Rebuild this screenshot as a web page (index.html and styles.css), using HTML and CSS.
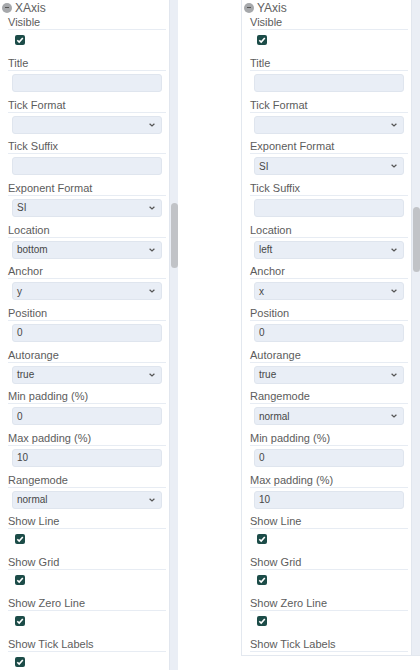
FILE: index.html
```html
<!DOCTYPE html>
<html lang="en">
  <head>
    <meta charset="UTF-8" />
    <title>Axis Settings</title>
    <link rel="stylesheet" href="styles.css">
  </head>
  <body>
    <div class="board">
      <section class="panel panel-x">
        <div class="panel-body">
          <div class="panel-head">
            <span class="toggle"><span class="dash"></span></span>
            <span>XAxis</span>
          </div>

          <div class="row check-row"><div class="label">Visible</div><span class="check"><svg viewBox="0 0 10 10"><path d="M2.3 5.2 L4.2 7.1 L7.8 2.9" /></svg></span></div>
          <div class="row"><div class="label">Title</div><div class="input"></div></div>
          <div class="row"><div class="label">Tick Format</div><div class="input select"><span></span><svg class="chev" viewBox="0 0 6 4"><path d="M0.6 0.7 L3 3 L5.4 0.7" /></svg></div></div>
          <div class="row"><div class="label">Tick Suffix</div><div class="input"></div></div>
          <div class="row"><div class="label">Exponent Format</div><div class="input select"><span>SI</span><svg class="chev" viewBox="0 0 6 4"><path d="M0.6 0.7 L3 3 L5.4 0.7" /></svg></div></div>
          <div class="row"><div class="label">Location</div><div class="input select"><span>bottom</span><svg class="chev" viewBox="0 0 6 4"><path d="M0.6 0.7 L3 3 L5.4 0.7" /></svg></div></div>
          <div class="row"><div class="label">Anchor</div><div class="input select"><span>y</span><svg class="chev" viewBox="0 0 6 4"><path d="M0.6 0.7 L3 3 L5.4 0.7" /></svg></div></div>
          <div class="row"><div class="label">Position</div><div class="input"><span>0</span></div></div>
          <div class="row"><div class="label">Autorange</div><div class="input select"><span>true</span><svg class="chev" viewBox="0 0 6 4"><path d="M0.6 0.7 L3 3 L5.4 0.7" /></svg></div></div>
          <div class="row"><div class="label">Min padding (%)</div><div class="input"><span>0</span></div></div>
          <div class="row"><div class="label">Max padding (%)</div><div class="input"><span>10</span></div></div>
          <div class="row"><div class="label">Rangemode</div><div class="input select"><span>normal</span><svg class="chev" viewBox="0 0 6 4"><path d="M0.6 0.7 L3 3 L5.4 0.7" /></svg></div></div>
          <div class="row check-row"><div class="label">Show Line</div><span class="check"><svg viewBox="0 0 10 10"><path d="M2.3 5.2 L4.2 7.1 L7.8 2.9" /></svg></span></div>
          <div class="row check-row"><div class="label">Show Grid</div><span class="check"><svg viewBox="0 0 10 10"><path d="M2.3 5.2 L4.2 7.1 L7.8 2.9" /></svg></span></div>
          <div class="row check-row"><div class="label">Show Zero Line</div><span class="check"><svg viewBox="0 0 10 10"><path d="M2.3 5.2 L4.2 7.1 L7.8 2.9" /></svg></span></div>
          <div class="row check-row"><div class="label">Show Tick Labels</div><span class="check"><svg viewBox="0 0 10 10"><path d="M2.3 5.2 L4.2 7.1 L7.8 2.9" /></svg></span></div>
        </div>
        <div class="track"><div class="thumb"></div></div>
      </section>

      <section class="panel panel-y">
        <div class="panel-body">
          <div class="panel-head">
            <span class="toggle"><span class="dash"></span></span>
            <span>YAxis</span>
          </div>

          <div class="row check-row"><div class="label">Visible</div><span class="check"><svg viewBox="0 0 10 10"><path d="M2.3 5.2 L4.2 7.1 L7.8 2.9" /></svg></span></div>
          <div class="row"><div class="label">Title</div><div class="input"></div></div>
          <div class="row"><div class="label">Tick Format</div><div class="input select"><span></span><svg class="chev" viewBox="0 0 6 4"><path d="M0.6 0.7 L3 3 L5.4 0.7" /></svg></div></div>
          <div class="row"><div class="label">Exponent Format</div><div class="input select"><span>SI</span><svg class="chev" viewBox="0 0 6 4"><path d="M0.6 0.7 L3 3 L5.4 0.7" /></svg></div></div>
          <div class="row"><div class="label">Tick Suffix</div><div class="input"></div></div>
          <div class="row"><div class="label">Location</div><div class="input select"><span>left</span><svg class="chev" viewBox="0 0 6 4"><path d="M0.6 0.7 L3 3 L5.4 0.7" /></svg></div></div>
          <div class="row"><div class="label">Anchor</div><div class="input select"><span>x</span><svg class="chev" viewBox="0 0 6 4"><path d="M0.6 0.7 L3 3 L5.4 0.7" /></svg></div></div>
          <div class="row"><div class="label">Position</div><div class="input"><span>0</span></div></div>
          <div class="row"><div class="label">Autorange</div><div class="input select"><span>true</span><svg class="chev" viewBox="0 0 6 4"><path d="M0.6 0.7 L3 3 L5.4 0.7" /></svg></div></div>
          <div class="row"><div class="label">Rangemode</div><div class="input select"><span>normal</span><svg class="chev" viewBox="0 0 6 4"><path d="M0.6 0.7 L3 3 L5.4 0.7" /></svg></div></div>
          <div class="row"><div class="label">Min padding (%)</div><div class="input"><span>0</span></div></div>
          <div class="row"><div class="label">Max padding (%)</div><div class="input"><span>10</span></div></div>
          <div class="row check-row"><div class="label">Show Line</div><span class="check"><svg viewBox="0 0 10 10"><path d="M2.3 5.2 L4.2 7.1 L7.8 2.9" /></svg></span></div>
          <div class="row check-row"><div class="label">Show Grid</div><span class="check"><svg viewBox="0 0 10 10"><path d="M2.3 5.2 L4.2 7.1 L7.8 2.9" /></svg></span></div>
          <div class="row check-row"><div class="label">Show Zero Line</div><span class="check"><svg viewBox="0 0 10 10"><path d="M2.3 5.2 L4.2 7.1 L7.8 2.9" /></svg></span></div>
          <div class="row check-row"><div class="label">Show Tick Labels</div><span class="check"><svg viewBox="0 0 10 10"><path d="M2.3 5.2 L4.2 7.1 L7.8 2.9" /></svg></span></div>
        </div>
        <div class="track"><div class="thumb"></div></div>
      </section>
    </div>
  </body>
</html>
```

FILE: styles.css
```css
html,
body {
  margin: 0;
  height: 670px;
  overflow: hidden;
  background-color: #fff;
  font-family: "Liberation Sans", Arial, sans-serif;
}

.board {
  display: flex;
  gap: 63px;
  margin-left: -1px;
}

.panel {
  display: flex;
  width: 179px;
  overflow: hidden;
  border-left: 1px solid #e3e8ef;
  box-sizing: border-box;
}

.panel-x {
  height: 670px;
}

.panel-y {
  height: 656px;
  border-bottom: 1px solid #e3e8ef;
}

.panel-body {
  width: 158px;
  padding: 0 3px 0 8px;
  flex: none;
}

.panel-head {
  display: flex;
  align-items: center;
  gap: 3px;
  height: 15px;
  margin-left: -6px;
  font-size: 12px;
  color: #5e5e5e;
}

.toggle {
  display: flex;
  align-items: center;
  justify-content: center;
  width: 10px;
  height: 10px;
  border-radius: 50%;
  background-color: #a6a8ab;
}

.toggle .dash {
  width: 4px;
  height: 1px;
  background-color: #555;
}

.row {
  height: 41.67px;
}

.check-row {
  height: 41px;
}

.label {
  font-size: 11px;
  line-height: 14px;
  color: #5c5c5c;
  border-bottom: 1px solid #e7ecf3;
  white-space: nowrap;
}

.input {
  display: flex;
  align-items: center;
  justify-content: space-between;
  height: 18px;
  margin: 3px 4px 0 4px;
  padding: 0 6px 0 4px;
  box-sizing: border-box;
  background-color: #e9eef6;
  border: 1px solid #dfe5ee;
  border-radius: 3px;
  font-size: 10px;
  color: #474747;
}

.chev {
  width: 6px;
  height: 4px;
  fill: none;
  stroke: #555;
  stroke-width: 1.2;
}

.check {
  display: block;
  width: 10px;
  height: 10px;
  margin: 5px 0 0 7px;
  border-radius: 2px;
  background-color: #1c4c48;
}

.check svg {
  display: block;
  width: 10px;
  height: 10px;
  fill: none;
  stroke: #fff;
  stroke-width: 1.6;
}

.track {
  flex: 1;
  background-color: #eaeef5;
  border-left: 1px solid #e1e6ee;
  padding: 0 1px;
}

.thumb {
  width: 7px;
  height: 65px;
  border-radius: 4px;
  background-color: #c1c3c7;
}

.panel-x .thumb {
  margin-top: 203px;
}

.panel-y .thumb {
  margin-top: 207px;
}
```
